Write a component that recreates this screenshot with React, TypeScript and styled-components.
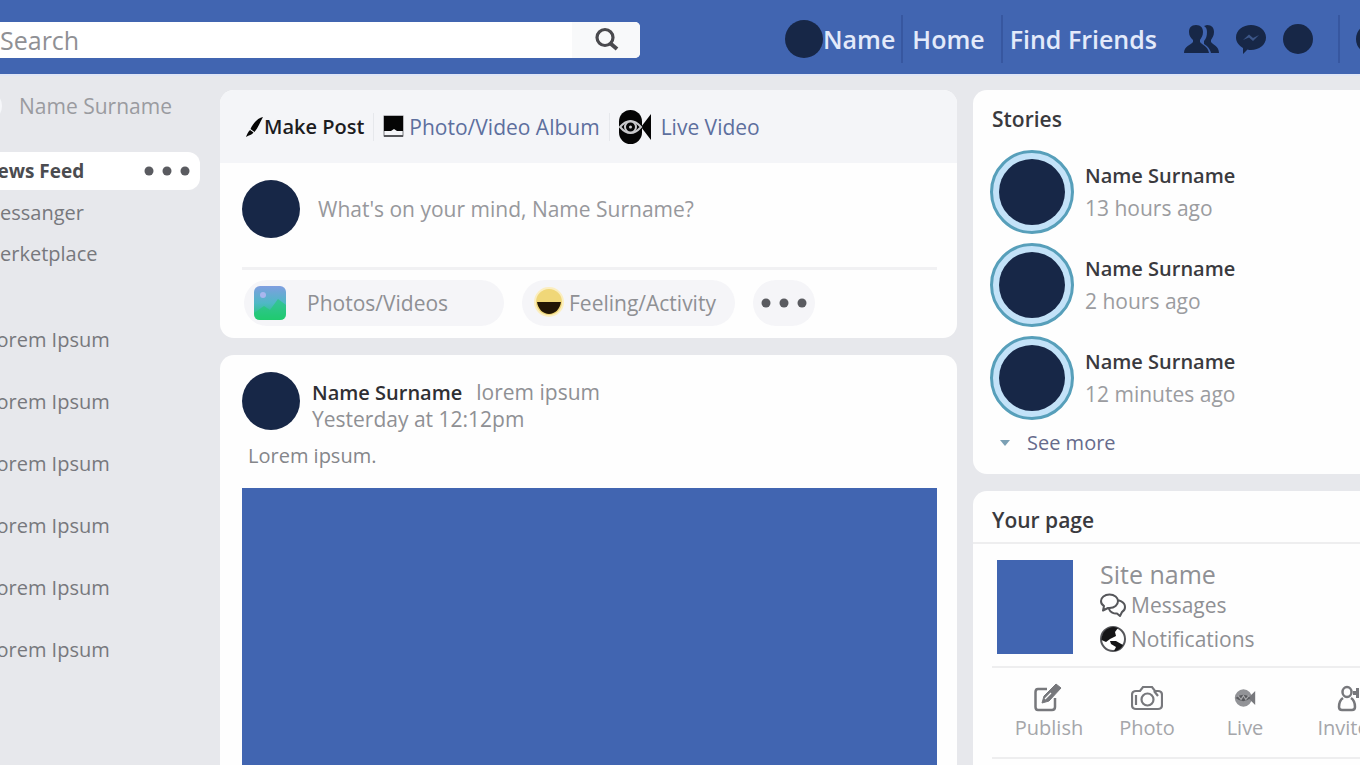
import React from 'react';
import styled, { createGlobalStyle } from 'styled-components';

const navy = '#172747';
const blue = '#4165b1';

const GlobalStyle = createGlobalStyle`
  *, *::before, *::after { box-sizing: border-box; }
  body {
    margin: 0;
    overflow: hidden;
    background: #e7e8ec;
    font-family: "Open Sans", "Noto Sans", sans-serif;
    color: #8f9094;
  }
  h2, p, ul { margin: 0; padding: 0; }
  ul { list-style: none; }
  a { color: inherit; text-decoration: none; }
  button {
    border: 0;
    padding: 0;
    background: none;
    font: inherit;
    color: inherit;
    cursor: pointer;
  }
  svg { display: block; flex: none; }
`;

const Page = styled.div`
  display: flex;
  flex-direction: column;
  height: 100vh;
  overflow: hidden;
`;

const Header = styled.header`
  display: flex;
  flex: none;
  align-items: center;
  justify-content: space-between;
  height: 76px;
  padding-top: 4px;
  overflow: hidden;
  background: ${blue};
  border-bottom: 2px solid #dfe5f5;
`;

const Search = styled.form`
  display: flex;
  flex: 0 1 640px;
  height: 36px;
  margin-top: 2px;
  overflow: hidden;
  border-radius: 0 5px 5px 0;
  background: #fff;
`;

const SearchInput = styled.input`
  flex: 1;
  min-width: 0;
  padding: 0;
  border: 0;
  outline: 0;
  background: none;
  font: 400 25px/36px "Open Sans", sans-serif;
  color: #8f9094;
  &::placeholder { color: #8f9094; opacity: 1; }
`;

const SearchButton = styled.button`
  display: grid;
  place-items: center;
  width: 68px;
  background: #f8f9fa;
  color: #4a4a4e;
`;

const Nav = styled.nav`
  display: flex;
  flex: 0 0 575px;
  align-items: center;
  overflow: hidden;
  height: 48px;
  color: #e3eafa;
  font-size: 25px;
  line-height: 48px;
  font-weight: 600;
  white-space: nowrap;
`;

const NavLink = styled.a`
  display: flex;
  align-items: center;
  flex: none;
`;

const NavRule = styled.span<{ $before: number; $after: number }>`
  flex: none;
  width: 2px;
  height: 48px;
  margin: 0 ${(p) => p.$after}px 0 ${(p) => p.$before}px;
  background: #3757a0;
`;

const NavIcons = styled.div`
  display: flex;
  flex: none;
  align-items: center;
  gap: 17px;
  margin-left: 27px;
  color: ${navy};
`;

const NavButton = styled.button`
  display: block;
`;

const Dot = styled.span<{ $size: number }>`
  display: block;
  flex: none;
  width: ${(p) => p.$size}px;
  height: ${(p) => p.$size}px;
  border-radius: 50%;
  background: ${navy};
`;

const Columns = styled.div`
  display: grid;
  grid-template-columns: 200px minmax(0, 1fr) 387px;
  flex: 1;
  min-height: 0;
  padding-top: 14px;
`;

const Sidebar = styled.aside`
  min-width: 0;
  overflow: hidden;
  font-size: 20px;
  line-height: 32px;
  color: #77787d;
  white-space: nowrap;
`;

const Profile = styled.a`
  display: flex;
  align-items: center;
  height: 32px;
  margin-left: -30px;
  gap: 17px;
  font-size: 21px;
  color: #9a9ba0;
`;

const ProfilePhoto = styled.span`
  width: 32px;
  height: 32px;
  border-radius: 50%;
  background: #f6f7fa;
`;

const ActiveItem = styled.div`
  display: flex;
  align-items: center;
  justify-content: space-between;
  height: 38px;
  margin-top: 30px;
  padding-right: 9px;
  border-radius: 0 12px 12px 0;
  background: #fff;
  font-size: 19px;
  font-weight: 700;
  color: #4b4c50;
`;

const MenuList = styled.ul`
  display: flex;
  flex-direction: column;
  gap: 9px;
  margin-top: 7px;
`;

const ShortcutList = styled.ul`
  display: flex;
  flex-direction: column;
  gap: 30px;
  margin-top: 54px;
`;

const MenuLink = styled.a`
  display: block;
  margin-left: -18px;
`;

const ShortcutLink = styled(MenuLink)`
  margin-left: -14px;
`;

const Card = styled.section<{ $grow?: boolean }>`
  display: flex;
  flex-direction: column;
  flex: ${(p) => (p.$grow ? '1 0 auto' : 'none')};
  overflow: hidden;
  border-radius: ${(p) => (p.$grow ? '14px 14px 0 0' : '14px')};
  background: #fefefe;
`;

const Feed = styled.main`
  display: flex;
  flex-direction: column;
  gap: 17px;
  min-width: 0;
  padding: 0 16px 0 20px;
`;

const Tabs = styled.div`
  display: flex;
  align-items: center;
  height: 73px;
  padding: 0 26px;
  background: #f4f5f8;
  font-size: 21px;
  line-height: 28px;
  white-space: nowrap;
`;

const Tab = styled.button<{ $active?: boolean; $gap: number }>`
  display: flex;
  align-items: center;
  gap: ${(p) => p.$gap}px;
  font-size: ${(p) => (p.$active ? 20 : 21)}px;
  font-weight: ${(p) => (p.$active ? 600 : 400)};
  color: ${(p) => (p.$active ? '#1c1c1f' : '#5d6f9e')};
  svg { color: #050505; }
`;

const TabRule = styled.span`
  width: 1px;
  height: 28px;
  margin: 0 8px 0 9px;
  background: #e6e8ec;
`;

const Composer = styled.label`
  display: flex;
  align-items: center;
  gap: 18px;
  height: 107px;
  margin: 0 20px 0 22px;
  padding-bottom: 12px;
  border-bottom: 3px solid #f1f1f3;
`;

const ComposerInput = styled.input`
  flex: 1;
  min-width: 0;
  padding: 0;
  border: 0;
  outline: 0;
  background: none;
  font: 400 21px/28px "Open Sans", sans-serif;
  color: #97989c;
  &::placeholder { color: #97989c; opacity: 1; }
`;

const Actions = styled.div`
  display: flex;
  gap: 18px;
  padding: 10px 22px 12px 24px;
`;

const Pill = styled.button<{ $width: number; $gap: number }>`
  display: flex;
  align-items: center;
  gap: ${(p) => p.$gap}px;
  width: ${(p) => p.$width}px;
  height: 46px;
  padding: 0 10px;
  border-radius: 23px;
  background: #f5f5f8;
  font-size: 21px;
  line-height: 28px;
  white-space: nowrap;
`;

const RoundPill = styled(Pill)`
  justify-content: center;
  padding: 0;
`;

const PostHead = styled.div`
  display: flex;
  align-items: center;
  gap: 12px;
  padding: 14px 22px 0;
`;

const PostMeta = styled.div`
  padding-top: 10px;
  font-size: 21px;
  line-height: 26px;
`;

const Strong = styled.strong`
  margin-right: 14px;
  font-size: 20px;
  font-weight: 600;
  color: #2f2f33;
`;

const PostText = styled.p`
  padding: 10px 28px 18px;
  font-size: 20px;
  line-height: 28px;
  color: #85868a;
`;

const PostImage = styled.div`
  flex: 1 0 276px;
  margin: 0 20px 0 22px;
  background: ${blue};
`;

const Rail = styled.aside`
  display: flex;
  flex-direction: column;
  gap: 17px;
  min-width: 0;
`;

const RailCard = styled(Card)`
  border-top-right-radius: 0;
  border-bottom-right-radius: 0;
`;

const RailTitle = styled.h2`
  padding: 15px 19px 0;
  font-size: 21px;
  line-height: 28px;
  font-weight: 600;
  color: #3a3a3e;
`;

const StoryList = styled.ul`
  display: flex;
  flex-direction: column;
  gap: 9px;
  padding: 17px 17px 0;
`;

const Story = styled.li`
  display: flex;
  gap: 11px;
  height: 84px;
`;

const StoryRing = styled.span`
  flex: none;
  width: 84px;
  height: 84px;
  padding: 6px;
  border: 3px solid #579fba;
  border-radius: 50%;
  background: #c3e2f8;
`;

const StoryText = styled.div`
  padding-top: 10px;
  font-size: 21px;
  line-height: 32px;
  color: #9b9ca0;
`;

const StoryName = styled.p`
  font-weight: 600;
  font-size: 20px;
  color: #3a3a3e;
`;

const SeeMore = styled.button`
  display: flex;
  align-items: center;
  gap: 17px;
  margin: 9px 0 17px 27px;
  font-size: 20px;
  line-height: 28px;
  color: #666b8c;
`;

const PageTitle = styled(RailTitle)`
  padding-bottom: 8px;
  border-bottom: 2px solid #eeeeef;
`;

const PageRow = styled.div`
  display: flex;
  gap: 27px;
  margin-left: 19px;
  padding: 16px 0 10px 5px;
  border-bottom: 2px solid #eeeeef;
`;

const PagePhoto = styled.div`
  width: 76px;
  height: 94px;
  background: ${blue};
`;

const PageInfo = styled.div`
  display: flex;
  flex-direction: column;
  align-items: flex-start;
  font-size: 21px;
  line-height: 34px;
`;

const SiteName = styled.a`
  font-size: 25px;
  line-height: 28px;
`;

const PageLink = styled.a`
  display: flex;
  align-items: center;
  gap: 5px;
`;

const Tools = styled.div`
  display: grid;
  grid-template-columns: repeat(4, 98px);
  margin-left: 19px;
  padding: 14px 0 15px 8px;
  border-bottom: 2px solid #eeeeef;
`;

const Tool = styled.button`
  display: flex;
  flex-direction: column;
  align-items: center;
  font-size: 20px;
  line-height: 28px;
  color: #a5a6aa;
  svg { color: #77787c; }
`;

const DotsIcon = () => (
  <svg width="48" height="12" viewBox="0 0 48 12" fill="#5a5b60">
    <circle cx="6" cy="6" r="4.5" />
    <circle cx="24" cy="6" r="4.5" />
    <circle cx="42" cy="6" r="4.5" />
  </svg>
);

const SearchIcon = () => (
  <svg width="26" height="26" viewBox="0 0 26 26" fill="none" stroke="currentColor" strokeWidth="3.2">
    <circle cx="12" cy="10.5" r="8" />
    <path d="M17.5 16.5 L24 22" strokeWidth="4" />
  </svg>
);

const FriendsIcon = () => (
  <svg width="35" height="30" viewBox="0 0 35 30" fill="currentColor">
    <path d="M23 1 C28 1 30 4 30 8 C30 12 28 14 27 16 V18 C29 21 35 22 35 29 H27 C26 24 22 21 20 20 V17 C22 15 23 12 23 8 C23 5 22 3 20 2 Z" />
    <path d="M12 1 C17 1 19 4 19 8 C19 12 17 14 16 16 V18 C18 21 24 22 25 29 H0 C0 22 7 21 9 18 V16 C7 14 5 12 5 8 C5 4 7 1 12 1 Z" />
  </svg>
);

const MessengerIcon = () => (
  <svg width="30" height="32" viewBox="0 0 30 32">
    <path
      d="M15 2 C23 2 30 7 30 14.500 C30 22 23 27 15 27 C14 27 12.500 27 11.500 26.500 L7 31 V25 C3 22.500 0 19 0 14.500 C0 7 7 2 15 2 Z"
      fill="currentColor"
    />
    <path d="M7 17 L13 11.500 L17 15 L23 12 L17 18 L13 14.500 Z" fill="#3c5688" />
  </svg>
);

const BrushIcon = () => (
  <svg width="18" height="22" viewBox="0 0 18 22" fill="currentColor">
    <path d="M17 1 C12 2 7 7 4.5 13 L8.5 16 C12 12 14 6 17 1 Z" />
    <path d="M4 14 L7.5 16.5 C6 19 3 19 0 21 C1 18 2 16 4 14 Z" />
  </svg>
);

const AlbumIcon = () => (
  <svg width="22" height="23" viewBox="0 0 22 23">
    <rect x="2" y="1" width="19" height="20" fill="#f4f5f8" stroke="#77787c" />
    <path d="M2 1 H21 V16 H15 L12 14 L9 16 H2 Z" fill="currentColor" />
    <rect x="2" y="20" width="19" height="2" fill="#55565a" />
  </svg>
);

const LiveIcon = () => (
  <svg width="34" height="36" viewBox="0 0 34 36">
    <rect x="1" y="1" width="23" height="34" rx="11.5" fill="currentColor" />
    <path d="M23 18 L33 5 V31 Z" fill="currentColor" />
    <path d="M2 18 Q12.500 6 23 18 Q12.500 30 2 18 Z" fill="none" stroke="#c9c9cc" strokeWidth="2" />
    <circle cx="12.500" cy="18" r="5.500" fill="currentColor" stroke="#c9c9cc" strokeWidth="2" />
    <circle cx="12.500" cy="18" r="1.500" fill="#c9c9cc" />
  </svg>
);

const PictureIcon = () => (
  <svg width="32" height="34" viewBox="0 0 32 34">
    <defs>
      <linearGradient id="sky" x1="0" y1="0" x2="0" y2="1">
        <stop offset="0" stopColor="#7f9ee0" />
        <stop offset="0.5" stopColor="#4fb8c6" />
        <stop offset="1" stopColor="#1fc96b" />
      </linearGradient>
    </defs>
    <rect width="32" height="34" rx="6" fill="url(#sky)" />
    <circle cx="9" cy="9" r="3" fill="#a9b6ee" />
    <path d="M0 27 L10 20 L16 24 L24 13 L32 19 V28 Q32 34 26 34 H6 Q0 34 0 28 Z" fill="#1fcb70" opacity="0.6" />
  </svg>
);

const SmileIcon = () => (
  <svg width="32" height="32" viewBox="0 0 32 32">
    <circle cx="17" cy="15" r="15" fill="#fbeec0" />
    <circle cx="17" cy="15" r="13" fill="#f0d778" />
    <path d="M5 15 H29 C28 22 23 27 17 27 C11 27 6 22 5 15 Z" fill="#231605" />
  </svg>
);

const CaretIcon = () => (
  <svg width="10" height="6" viewBox="0 0 10 6">
    <path d="M0 0 H10 L5 6 Z" fill="#7ba0b4" />
  </svg>
);

const ChatsIcon = () => (
  <svg width="26" height="24" viewBox="0 0 26 24" fill="#fefefe" stroke="#55565a" strokeWidth="2" strokeLinejoin="round">
    <path d="M13 8 C19 6 25 9 25 14 C25 16 24 18 22 19 L20 23 L17 20.500 C14 21 10 19 9 16 Z" />
    <path d="M9.500 1.500 C14.500 1.500 18 4.500 18 8 C18 12 14.500 15 9.500 15 L8 15 L3 17.500 L4 13 C2 12 1 10 1 8 C1 4.500 4.500 1.500 9.500 1.500 Z" />
  </svg>
);

const GlobeIcon = () => (
  <svg width="26" height="28" viewBox="0 0 26 28">
    <circle cx="13" cy="14" r="12" fill="#fefefe" stroke="#55565a" strokeWidth="2" />
    <path d="M1.500 15 C1.500 7 7 2 14 2 L18 3 L15 7 L16 11 L10 14 L6 17 Z" fill="#151516" />
    <path d="M10 16 L16 16 L23 20 C21 24 17 26 14 26 L16 22 L11 19 Z" fill="#151516" />
  </svg>
);

const PublishIcon = () => (
  <svg width="30" height="32" viewBox="0 0 30 32" fill="none" stroke="currentColor" strokeWidth="2.500">
    <path d="M13 7 H4 Q1.500 7 1.500 10 V25 Q1.500 28 4 28 H18 Q21 28 21 25 V16" />
    <path d="M8 21 L10 14 L22 2 L27 6 L15 19 Z" fill="currentColor" strokeWidth="1" />
    <path d="M11 17 L17 11" stroke="#fefefe" strokeWidth="1.200" />
  </svg>
);

const CameraIcon = () => (
  <svg width="32" height="32" viewBox="0 0 32 32" fill="none" stroke="currentColor" strokeWidth="2.200">
    <path d="M5 9 H9 L12 5 H21 L24 9 H27 Q31 9 31 13 V23 Q31 27 27 27 H5 Q1 27 1 23 V13 Q1 9 5 9 Z" />
    <circle cx="16.500" cy="17.500" r="6" />
    <path d="M5 13 V23 M23 9 L27 14" />
  </svg>
);

const VideoIcon = () => (
  <svg width="22" height="32" viewBox="0 0 28 32">
    <circle cx="12" cy="16" r="11" fill="#929397" />
    <path d="M18 16 L27 7 V25 Z" fill="currentColor" />
    <path d="M2 16 Q12 8 21 16 Q12 24 2 16 Z" fill="#5a5b5f" />
    <path d="M5 13 L9 18 L12 13 L15 18 L19 13" fill="none" stroke="#a9a9ac" strokeWidth="1.500" />
  </svg>
);

const InviteIcon = () => (
  <svg width="32" height="32" viewBox="0 0 32 32" fill="none" stroke="currentColor" strokeWidth="2.500">
    <ellipse cx="20" cy="10" rx="4.500" ry="5" />
    <path d="M16 16 C13 18 12 21 12 25 Q12 28 15 28 H25 Q28 28 28 25 C28 21 27 18 24 16" />
    <path d="M26 11 H36 M31 6 V16" strokeWidth="4" />
  </svg>
);

const stories = [
  { name: 'Name Surname', time: '13 hours ago' },
  { name: 'Name Surname', time: '2 hours ago' },
  { name: 'Name Surname', time: '12 minutes ago' },
];

const shortcuts = [1, 2, 3, 4, 5, 6];

const tools = [
  { label: 'Publish', Icon: PublishIcon },
  { label: 'Photo', Icon: CameraIcon },
  { label: 'Live', Icon: VideoIcon },
  { label: 'Invite', Icon: InviteIcon },
];

export default function App() {
  return (
    <Page>
      <GlobalStyle />
      <Header>
        <Search onSubmit={(e) => e.preventDefault()}>
          <SearchInput type="search" placeholder="Search" aria-label="Search" />
          <SearchButton type="submit" aria-label="Submit search"><SearchIcon /></SearchButton>
        </Search>
        <Nav>
          <NavLink href="#profile"><Dot $size={38} />Name</NavLink>
          <NavRule $before={6} $after={9} />
          <NavLink href="#home">Home</NavLink>
          <NavRule $before={16} $after={7} />
          <NavLink href="#friends">Find Friends</NavLink>
          <NavIcons>
            <NavButton aria-label="Friend requests"><FriendsIcon /></NavButton>
            <NavButton aria-label="Messages"><MessengerIcon /></NavButton>
            <NavButton aria-label="Notifications"><Dot $size={30} /></NavButton>
          </NavIcons>
          <NavRule $before={25} $after={16} />
          <NavButton aria-label="Help"><Dot $size={30} /></NavButton>
        </Nav>
      </Header>

      <Columns>
        <Sidebar>
          <Profile href="#profile"><ProfilePhoto />Name Surname</Profile>
          <ActiveItem>
            <MenuLink href="#feed">News Feed</MenuLink>
            <button aria-label="Feed options"><DotsIcon /></button>
          </ActiveItem>
          <MenuList>
            <li><MenuLink href="#messanger">Messanger</MenuLink></li>
            <li><MenuLink href="#merketplace">Merketplace</MenuLink></li>
          </MenuList>
          <ShortcutList>
            {shortcuts.map((n) => (
              <li key={n}><ShortcutLink href={`#shortcut-${n}`}>Lorem Ipsum</ShortcutLink></li>
            ))}
          </ShortcutList>
        </Sidebar>

        <Feed>
          <Card>
            <Tabs>
              <Tab $active $gap={0}><BrushIcon />Make Post</Tab>
              <TabRule />
              <Tab $gap={5}><AlbumIcon />Photo/Video Album</Tab>
              <TabRule />
              <Tab $gap={9}><LiveIcon />Live Video</Tab>
            </Tabs>
            <Composer>
              <Dot $size={58} />
              <ComposerInput placeholder="What's on your mind, Name Surname?" aria-label="Write a post" />
            </Composer>
            <Actions>
              <Pill $width={260} $gap={21}><PictureIcon />Photos/Videos</Pill>
              <Pill $width={213} $gap={5}><SmileIcon />Feeling/Activity</Pill>
              <RoundPill $width={62} $gap={0} aria-label="More options"><DotsIcon /></RoundPill>
            </Actions>
          </Card>
          <Card $grow>
            <PostHead>
              <Dot $size={58} />
              <PostMeta>
                <p><Strong>Name Surname</Strong>lorem ipsum</p>
                <p>Yesterday at 12:12pm</p>
              </PostMeta>
            </PostHead>
            <PostText>Lorem ipsum.</PostText>
            <PostImage />
          </Card>
        </Feed>

        <Rail>
          <RailCard>
            <RailTitle>Stories</RailTitle>
            <StoryList>
              {stories.map((s) => (
                <Story key={s.time}>
                  <StoryRing><Dot $size={66} /></StoryRing>
                  <StoryText>
                    <StoryName>{s.name}</StoryName>
                    <p>{s.time}</p>
                  </StoryText>
                </Story>
              ))}
            </StoryList>
            <SeeMore><CaretIcon />See more</SeeMore>
          </RailCard>
          <RailCard $grow>
            <PageTitle>Your page</PageTitle>
            <PageRow>
              <PagePhoto />
              <PageInfo>
                <SiteName href="#site">Site name</SiteName>
                <PageLink href="#messages"><ChatsIcon />Messages</PageLink>
                <PageLink href="#notifications"><GlobeIcon />Notifications</PageLink>
              </PageInfo>
            </PageRow>
            <Tools>
              {tools.map(({ label, Icon }) => (
                <Tool key={label}><Icon />{label}</Tool>
              ))}
            </Tools>
          </RailCard>
        </Rail>
      </Columns>
    </Page>
  );
}
